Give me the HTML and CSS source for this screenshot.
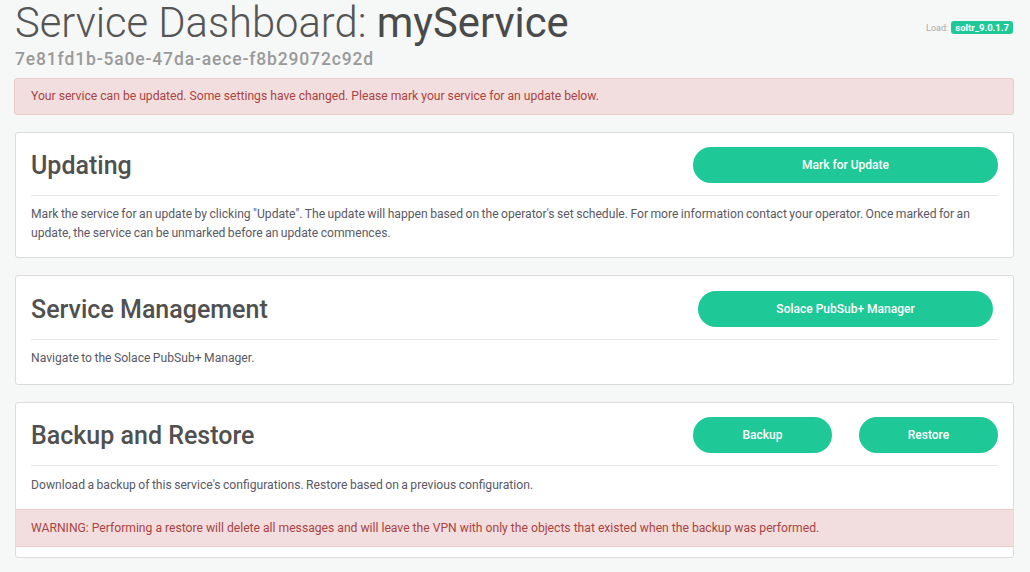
FILE: index.html
```html
<!DOCTYPE html>
<html lang="en">
<head>
<meta charset="utf-8">
<title>Service Dashboard</title>
<link rel="stylesheet" href="styles.css">
</head>
<body>
<div class="page">
  <header class="header">
    <div class="header-main">
      <h1 class="title"><span class="title-light">Service Dashboard:</span> <span class="title-name">myService</span></h1>
      <div class="uuid">7e81fd1b-5a0e-47da-aece-f8b29072c92d</div>
    </div>
    <div class="load">Load: <span class="badge">soltr_9.0.1.7</span></div>
  </header>

  <div class="alert">Your service can be updated. Some settings have changed. Please mark your service for an update below.</div>

  <section class="card">
    <div class="card-head">
      <h2 class="card-title">Updating</h2>
      <div class="actions">
        <button class="btn btn-wide">Mark for Update</button>
      </div>
    </div>
    <div class="card-body">
      <p>Mark the service for an update by clicking "Update". The update will happen based on the operator's set schedule. For more information contact your operator. Once marked for an update, the service can be unmarked before an update commences.</p>
    </div>
  </section>

  <section class="card card-mgmt">
    <div class="card-head">
      <h2 class="card-title">Service Management</h2>
      <div class="actions actions-inset">
        <button class="btn btn-wide">Solace PubSub+ Manager</button>
      </div>
    </div>
    <div class="card-body">
      <p>Navigate to the Solace PubSub+ Manager.</p>
    </div>
  </section>

  <section class="card card-backup">
    <div class="card-head">
      <h2 class="card-title">Backup and Restore</h2>
      <div class="actions actions-pair">
        <button class="btn">Backup</button>
        <button class="btn">Restore</button>
      </div>
    </div>
    <div class="card-body">
      <p>Download a backup of this service's configurations. Restore based on a previous configuration.</p>
    </div>
    <div class="card-warning">WARNING: Performing a restore will delete all messages and will leave the VPN with only the objects that existed when the backup was performed.</div>
  </section>
</div>
</body>
</html>
```
FILE: styles.css
```css
* { box-sizing: border-box; }

html, body {
  margin: 0;
  padding: 0;
  background: #f6f7f7;
}

body {
  font-family: Roboto, "Liberation Sans", sans-serif;
  color: #555;
  font-size: 12.15px;
}

.page {
  padding: 0 16px 0 15px;
}

.header {
  display: flex;
  justify-content: space-between;
  align-items: flex-start;
}

.title {
  margin: 0;
  font-size: 41.7px;
  line-height: 46px;
  font-weight: 400;
  color: #555;
}

.title-light { font-weight: 300; }
.title-name { font-weight: 400; color: #4a4a4a; }

.uuid {
  margin-top: 3px;
  font-size: 17.5px;
  line-height: 20px;
  font-weight: 500;
  letter-spacing: 0.85px;
  color: #9a9a9a;
}

.load {
  margin-top: 21px;
  margin-right: 1px;
  font-size: 9px;
  color: #aaa;
  display: flex;
  align-items: center;
  gap: 3px;
}

.badge {
  display: inline-block;
  background: #1ec997;
  color: #fff;
  font-weight: 700;
  font-size: 9.5px;
  line-height: 13px;
  padding: 0 4px;
  border-radius: 3px;
}

.alert {
  margin: 9px 0 17px -1px;
  padding: 9px 16px 10px;
  background: #f2dede;
  border: 1px solid #ebcccc;
  border-radius: 3px;
  color: #a94442;
  line-height: 16px;
}

.card {
  background: #fff;
  border: 1px solid #dcdcdc;
  border-radius: 3px;
  margin-bottom: 17px;
  overflow: hidden;
}

.card-head {
  display: flex;
  justify-content: space-between;
  align-items: center;
  margin: 0 15px;
  padding: 14px 0 12px;
  border-bottom: 1px solid #e6e6e6;
}

.card-mgmt .card-head { padding-top: 15px; }

.card-title {
  margin: 0;
  font-size: 25px;
  font-weight: 500;
  color: #505050;
}

.actions {
  width: 305px;
  display: flex;
}

.actions-inset { padding: 0 5px; }

.actions-pair { justify-content: space-between; }

.btn {
  font-family: inherit;
  height: 36px;
  border: 0;
  border-radius: 18px;
  background: #1ec997;
  color: #fff;
  font-size: 12px;
  font-weight: 500;
  width: 139px;
  padding: 0;
}

.btn-wide { width: 100%; }

.card-body {
  padding: 9px 15px 14px;
}

.card-mgmt .card-body { padding-bottom: 16px; }
.card-backup .card-body { padding: 10px 15px 14px; }

.card-body p {
  margin: 0;
  line-height: 19px;
  word-spacing: -0.6px;
  color: #5a5966;
}

.card-warning {
  margin-bottom: 10px;
  padding: 10px 15px;
  background: #f2dede;
  border-top: 1px solid #ebcccc;
  border-bottom: 1px solid #ebcccc;
  color: #a94442;
  line-height: 16px;
}
```
